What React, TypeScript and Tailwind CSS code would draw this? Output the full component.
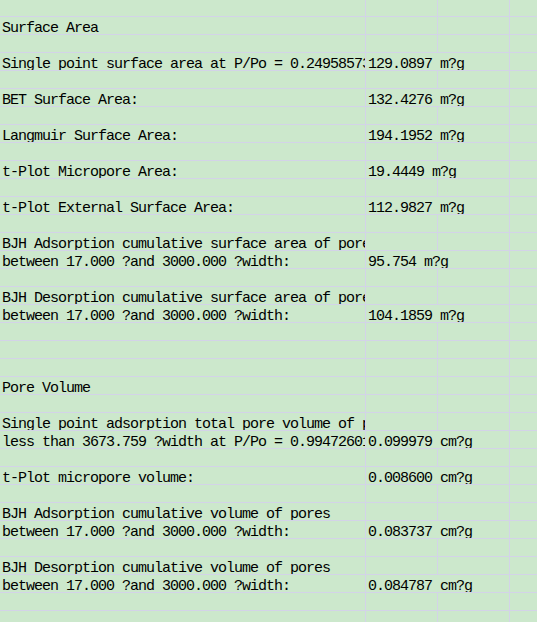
const rows: [string, string][] = [
  ['', ''],
  ['Surface Area', ''],
  ['', ''],
  ['Single point surface area at P/Po = 0.249585736', '129.0897 m?g'],
  ['', ''],
  ['BET Surface Area:', '132.4276 m?g'],
  ['', ''],
  ['Langmuir Surface Area:', '194.1952 m?g'],
  ['', ''],
  ['t-Plot Micropore Area:', '19.4449 m?g'],
  ['', ''],
  ['t-Plot External Surface Area:', '112.9827 m?g'],
  ['', ''],
  ['BJH Adsorption cumulative surface area of pores', ''],
  ['between 17.000 ?and 3000.000 ?width:', '95.754 m?g'],
  ['', ''],
  ['BJH Desorption cumulative surface area of pores', ''],
  ['between 17.000 ?and 3000.000 ?width:', '104.1859 m?g'],
  ['', ''],
  ['', ''],
  ['', ''],
  ['Pore Volume', ''],
  ['', ''],
  ['Single point adsorption total pore volume of pores', ''],
  ['less than 3673.759 ?width at P/Po = 0.994726011', '0.099979 cm?g'],
  ['', ''],
  ['t-Plot micropore volume:', '0.008600 cm?g'],
  ['', ''],
  ['BJH Adsorption cumulative volume of pores', ''],
  ['between 17.000 ?and 3000.000 ?width:', '0.083737 cm?g'],
  ['', ''],
  ['BJH Desorption cumulative volume of pores', ''],
  ['between 17.000 ?and 3000.000 ?width:', '0.084787 cm?g'],
  ['', ''],
  ['', ''],
];

export default function App() {
  return (
    <div
      className="w-[537px] h-[622px] overflow-hidden bg-[#cce8cc] text-black text-[15px] tracking-[-1px]"
      style={{ fontFamily: '"Liberation Mono", "DejaVu Sans Mono", monospace' }}
    >
      {rows.map(([a, b], i) => (
        <div
          key={i}
          className={`grid grid-cols-[366px_72px_72px_1fr] border-b border-[#d3d3e8] overflow-hidden ${
            i === 0 ? 'h-[17px]' : 'h-[18px]'
          }`}
        >
          <div className={`border-r border-[#d3d3e8] overflow-hidden whitespace-nowrap pl-[2px] ${i === 0 ? 'leading-[20px]' : 'leading-[23px]'}`}>
            {a}
          </div>
          {/* value cell spills into the next column like a spreadsheet */}
          <div className="col-span-2 whitespace-nowrap pl-[2px] leading-[23px] relative">
            <div className="absolute inset-0 grid grid-cols-[72px_72px]">
              <div className={b ? '' : 'border-r border-[#d3d3e8]'} />
              <div className="border-r border-[#d3d3e8]" />
            </div>
            <span className="relative">{b}</span>
          </div>
          <div />
        </div>
      ))}
    </div>
  );
}
